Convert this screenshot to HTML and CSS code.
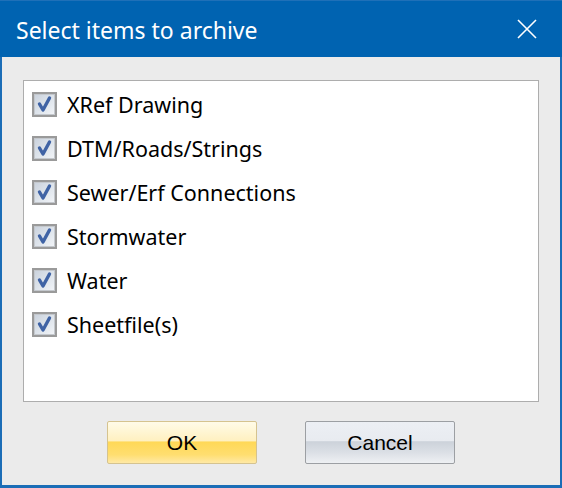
FILE: index.html
```html
<!DOCTYPE html>
<html>
<head>
<meta charset="utf-8">
<link rel="stylesheet" href="styles.css">
</head>
<body>
<div class="window">
  <div class="titlebar">
    <span class="title">Select items to archive</span>
    <svg class="close" width="20" height="20" viewBox="0 0 20 20"><path d="M1 1 L19 19 M19 1 L1 19" stroke="#fff" stroke-width="1.6" fill="none"/></svg>
  </div>
  <div class="content">
    <div class="list">
      <div class="row"><span class="cb"><svg viewBox="0 0 21 21"><path d="M5.5 10 L9 16 L15.5 4"/></svg></span><span class="label">XRef Drawing</span></div>
      <div class="row"><span class="cb"><svg viewBox="0 0 21 21"><path d="M5.5 10 L9 16 L15.5 4"/></svg></span><span class="label">DTM/Roads/Strings</span></div>
      <div class="row"><span class="cb"><svg viewBox="0 0 21 21"><path d="M5.5 10 L9 16 L15.5 4"/></svg></span><span class="label">Sewer/Erf Connections</span></div>
      <div class="row"><span class="cb"><svg viewBox="0 0 21 21"><path d="M5.5 10 L9 16 L15.5 4"/></svg></span><span class="label">Stormwater</span></div>
      <div class="row"><span class="cb"><svg viewBox="0 0 21 21"><path d="M5.5 10 L9 16 L15.5 4"/></svg></span><span class="label">Water</span></div>
      <div class="row"><span class="cb"><svg viewBox="0 0 21 21"><path d="M5.5 10 L9 16 L15.5 4"/></svg></span><span class="label">Sheetfile(s)</span></div>
    </div>
    <div class="buttons">
      <button class="btn ok">OK</button>
      <button class="btn cancel">Cancel</button>
    </div>
  </div>
</div>
</body>
</html>
```

FILE: styles.css
```css
html, body { margin: 0; padding: 0; }
body { width: 562px; height: 488px; overflow: hidden; }
.window {
  width: 562px; height: 488px; box-sizing: border-box;
  border: 2px solid #1b6db6; border-top: 0; border-bottom-width: 3px;
  background: #ebebeb;
  display: flex; flex-direction: column;
}
.titlebar {
  height: 57px; margin: 0 -2px; background: #0063b1;
  border-top: 1px solid #1f70b8; box-sizing: border-box;
  display: flex; align-items: center; justify-content: space-between;
  padding: 0 25px 0 16px;
}
.title {
  color: #fff; font-family: "Noto Sans", sans-serif; font-size: 23px;
  position: relative; top: 1px;
}
.close { display: block; }
.content { flex: 1; padding: 23px 21px 0 21px; }
.list {
  height: 322px; box-sizing: border-box; background: #fff;
  border: 1px solid #adadad; padding: 1px 0 0 8px;
}
.row { height: 44px; display: flex; align-items: center; }
.cb {
  width: 25px; height: 25px; box-sizing: border-box; margin-top: 1px;
  border: 2px solid #9a9a9a;
  background: linear-gradient(135deg, #c9d1dc 0%, #dfe5ec 55%, #f3f5f8 100%);
  box-shadow: inset 0 0 0 1px #c4c8cd;
  display: flex; align-items: center; justify-content: center;
}
.cb svg { width: 21px; height: 21px; display: block; }
.cb path { stroke: #3f63a5; stroke-width: 3.4; fill: none; stroke-linejoin: round; stroke-linecap: round; }
.label {
  margin-left: 10px; font-family: "Noto Sans", sans-serif; font-size: 21.5px; color: #000;
}
.buttons { display: flex; justify-content: center; gap: 48px; padding-top: 19px; }
.btn {
  width: 150px; height: 43px; box-sizing: border-box; border-radius: 2px;
  font-family: "Liberation Sans", Arial, sans-serif; font-size: 21px; color: #000;
  padding: 0;
}
.ok {
  border: 1px solid #d5c38f;
  background: linear-gradient(to bottom, #fffbe8 0%, #fff0bf 47%, #ffd856 48%, #ffde70 80%, #ffe9a6 100%);
}
.cancel {
  border: 1px solid #9c9fa3;
  background: linear-gradient(to bottom, #eceff4 0%, #e8ebf0 46%, #ccd2da 48%, #dce0e6 75%, #eef0f3 100%);
}
```
